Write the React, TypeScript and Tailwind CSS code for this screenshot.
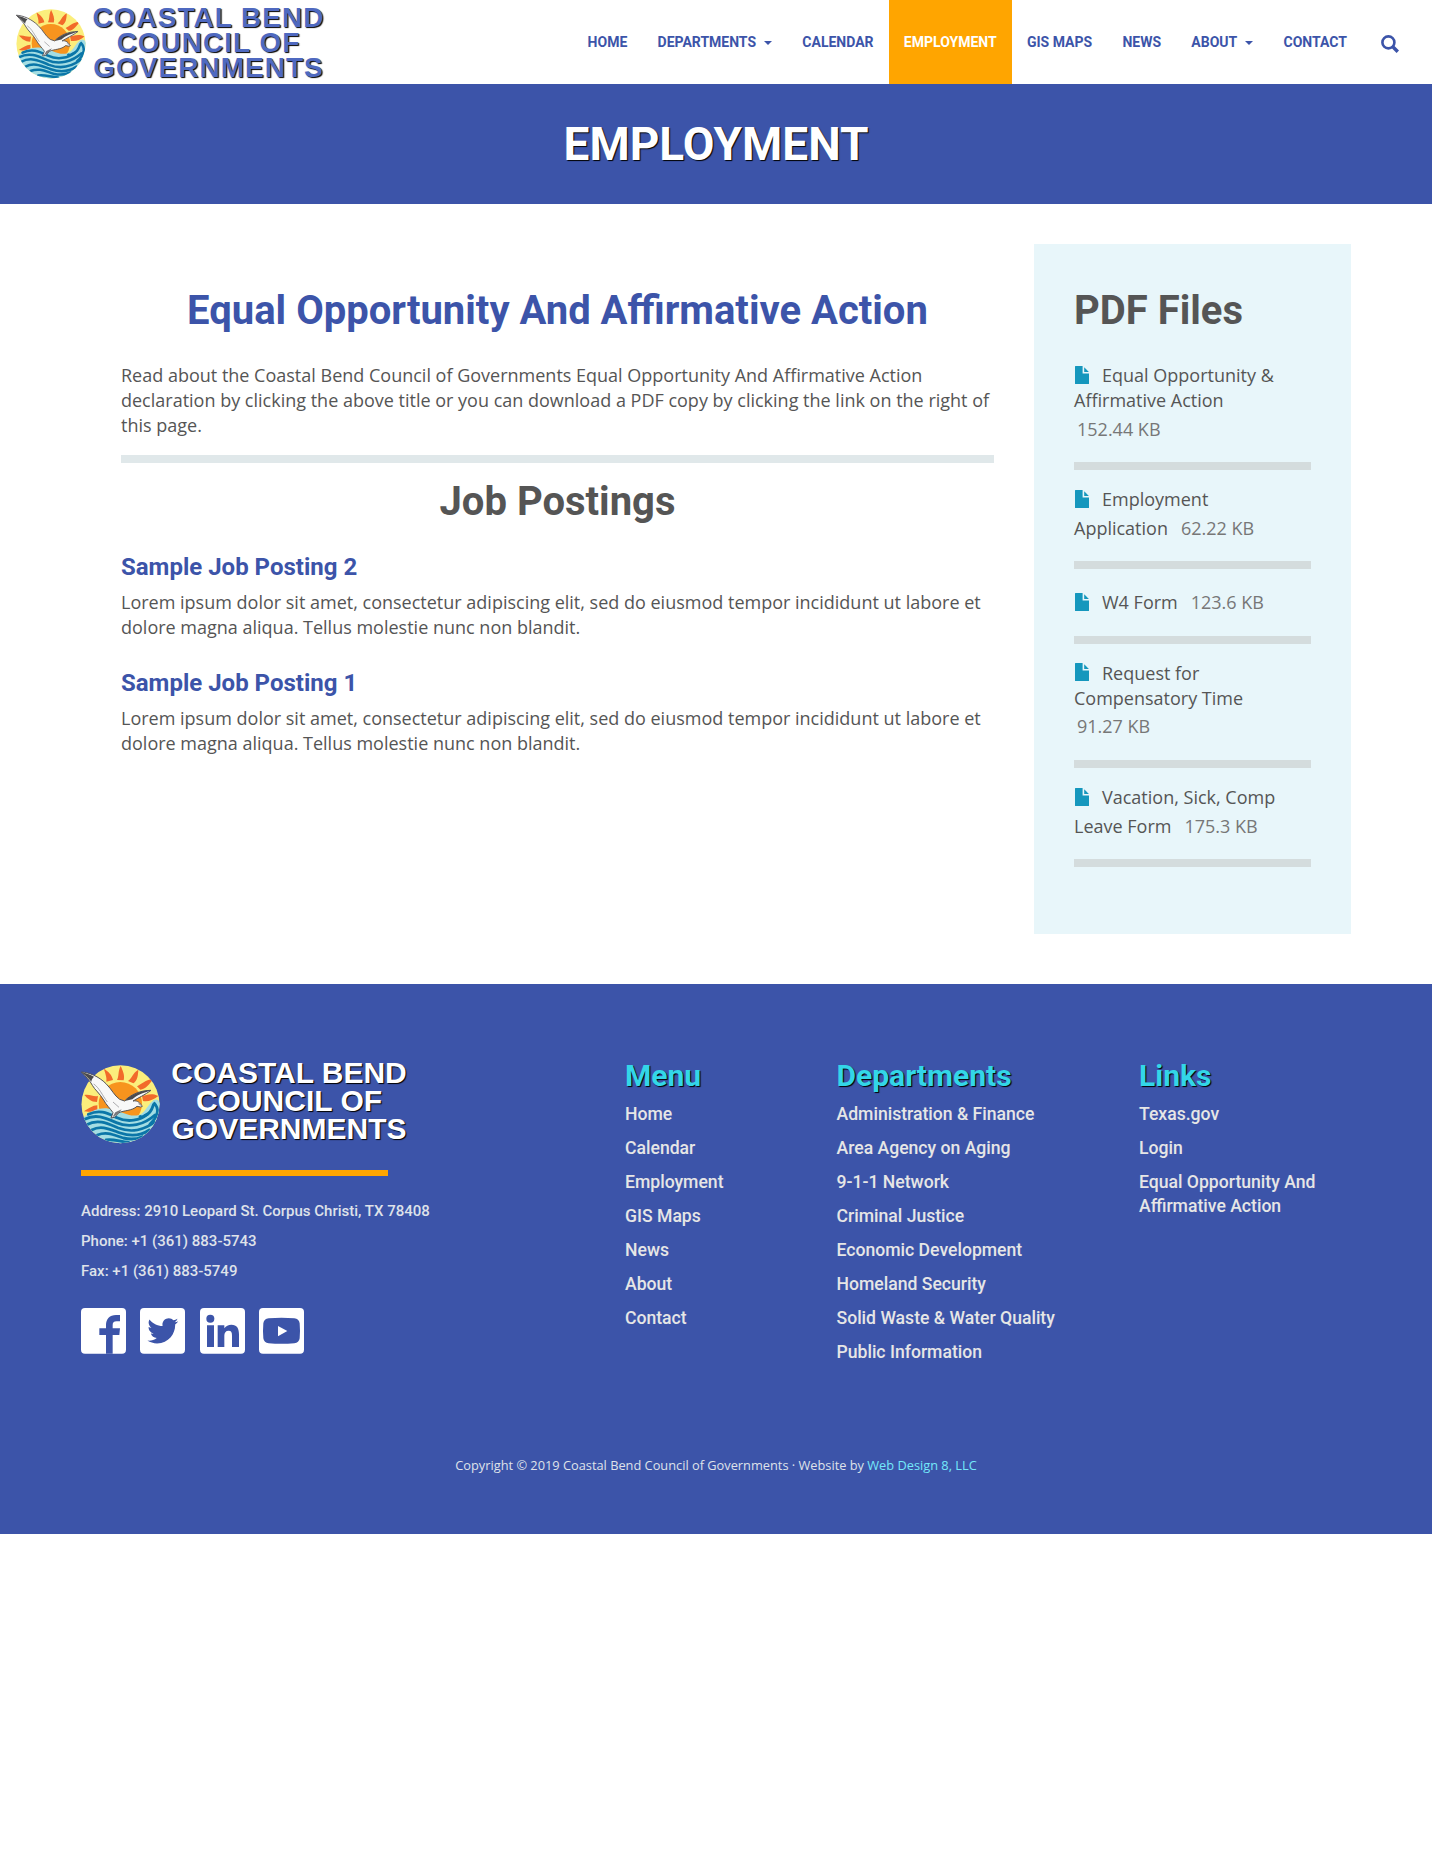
import type { ReactNode } from "react";

const navItems = [
  { label: "HOME" },
  { label: "DEPARTMENTS", caret: true },
  { label: "CALENDAR" },
  { label: "EMPLOYMENT", active: true },
  { label: "GIS MAPS" },
  { label: "NEWS" },
  { label: "ABOUT", caret: true },
  { label: "CONTACT" },
];

const files = [
  { first: "Equal Opportunity &", middle: "Affirmative Action", last: "", size: "152.44 KB" },
  { first: "Employment", middle: "", last: "Application", size: "62.22 KB" },
  { first: "", middle: "", last: "W4 Form", size: "123.6 KB" },
  { first: "Request for", middle: "Compensatory Time", last: "", size: "91.27 KB" },
  { first: "Vacation, Sick, Comp", middle: "", last: "Leave Form", size: "175.3 KB" },
];

const menuLinks = ["Home", "Calendar", "Employment", "GIS Maps", "News", "About", "Contact"];
const departmentLinks = [
  "Administration & Finance",
  "Area Agency on Aging",
  "9-1-1 Network",
  "Criminal Justice",
  "Economic Development",
  "Homeland Security",
  "Solid Waste & Water Quality",
  "Public Information",
];
const otherLinks = ["Texas.gov", "Login", "Equal Opportunity And Affirmative Action"];

function LogoMark({ className, id }: { className: string; id: string }) {
  return (
    <svg viewBox="0 0 237 237" className={className} aria-hidden="true">
      <defs>
        <clipPath id={id}>
          <circle cx="118.5" cy="118" r="117" />
        </clipPath>
      </defs>
      <g clipPath={`url(#${id})`}>
        <rect width="237" height="237" fill="#fbee7c" />
        <g fill="#f26a2a">
          <path d="M76 50C78 35 72 25 69 11C81 19 93 29 96 45Z" />
          <path d="M108 45C115 32 110 20 119 3C126 18 132 32 128 46Z" />
          <path d="M141 48C153 40 153 26 172 14C171 31 170 46 157 55Z" />
          <path d="M168 64C180 59 191 45 216 42C206 57 194 73 178 74Z" />
          <path d="M183 92C198 92 208 82 232 93C217 105 201 111 186 108Z" />
          <path d="M51 93C36 96 28 87 10 90C20 101 30 111 48 111Z" />
          <path d="M49 121C34 122 25 129 9 139C24 142 35 140 49 134Z" />
          <path d="M54 84C46 79 44 72 42 62L70 68Z" />
        </g>
        <circle cx="118" cy="116" r="65" fill="#f7941e" />
        <path
          d="M0 165C22 141 52 126 84 131C120 136 143 158 174 150C196 144 200 118 221 106C231 102 240 111 240 130V240H0Z"
          fill="#a3dde3"
        />
        <g fill="none" stroke="#0b76a8" strokeWidth="8.5" strokeLinecap="round">
          <path d="M22 148C57 132 80 145 108 158C142 174 178 165 199 148" />
          <path d="M11 163C45 145 74 159 106 173C145 190 190 179 222 150" />
          <path d="M17 179C52 160 83 177 112 189C151 204 190 194 219 172" />
          <path d="M32 195C61 179 87 193 118 204C150 215 181 211 205 195" />
          <path d="M49 210C80 198 102 212 127 219C148 224 169 222 184 215" />
          <path d="M75 225C96 221 116 230 143 232" />
          <path d="M177 155C211 151 214 128 219 114C224 119 231 127 229 142C226 158 218 168 207 177" />
        </g>
        <path d="M181 150C197 143 199 122 220 107C228 103 233 109 234 118" fill="none" stroke="#a3dde3" strokeWidth="5" />
      </g>
      <path
        d="M1 21C24 22 53 34 75 56C94 75 99 91 116 103L131 108C148 89 178 76 210 76C193 89 171 99 156 108C171 105 177 115 184 124L179 126L168 124C153 138 128 136 114 143L100 157L90 159L96 143C88 131 75 119 68 105C56 85 42 75 34 61C28 48 14 35 1 21Z"
        fill="#f8f8f8"
        stroke="#555457"
        strokeWidth="3"
        strokeLinejoin="round"
      />
      <path d="M1 21C15 25 28 29 39 35C34 40 32 43 31 50C22 39 11 30 1 21Z" fill="#4b4b4d" />
      <path d="M131 108C149 88 180 77 210 76C188 84 169 89 154 103Z" fill="#4b4b4d" />
      <path d="M94 157L103 142L122 133C115 143 110 149 94 157Z" fill="#77777a" />
      <path d="M38 57C54 67 64 91 79 111M96 111L114 127M172 116L184 124" fill="none" stroke="#99999c" strokeWidth="2.5" />
    </svg>
  );
}

function SearchIcon() {
  return (
    <svg viewBox="0 0 18 18" className="h-[18px] w-[18px]" fill="none" stroke="#3c54a9" aria-hidden="true">
      <circle cx="7.4" cy="7.4" r="6" strokeWidth="2.6" />
      <path d="M11.8 11.8L16.8 16.8" strokeWidth="3.4" />
    </svg>
  );
}

function FileIcon() {
  return (
    <svg viewBox="0 0 14 18" className="mt-[2.5px] mr-[13px] ml-px h-[18px] w-[14px] shrink-0" fill="#1597bd" aria-hidden="true">
      <path d="M0.5 0H7.6V7.6H14V17.5Q14 18 13.5 18H0.5Q0 18 0 17.5V0.5Q0 0 0.5 0Z" />
      <path d="M9.2 1.2L13.9 6H9.2Z" />
    </svg>
  );
}

function Social({ children }: { children: ReactNode }) {
  return (
    <svg viewBox="0 0 135 137" className="h-[45.7px] w-[45px]" aria-hidden="true">
      <rect width="135" height="137" rx="12" fill="#fff" />
      <g fill="#3c54a9">{children}</g>
    </svg>
  );
}

function FooterColumn({ title, links, className }: { title: string; links: string[]; className: string }) {
  return (
    <div className={className}>
      <h3 className="text-[30px] leading-[33px] font-bold text-[#33d6e8] [text-shadow:1px_1px_1px_#000]">{title}</h3>
      <ul className="mt-2.5 flex flex-col gap-2.5 text-[17.6px] leading-6 font-medium text-[#e6e6e6]">
        {links.map((link) => (
          <li key={link}>{link}</li>
        ))}
      </ul>
    </div>
  );
}

function JobPosting({ title }: { title: string }) {
  return (
    <article>
      <h3 className="font-[Roboto] text-2xl leading-[26px] font-bold text-[#3c54a9]">{title}</h3>
      <p className="mt-2.5">
        Lorem ipsum dolor sit amet, consectetur adipiscing elit, sed do eiusmod tempor incididunt ut labore et dolore
        magna aliqua. Tellus molestie nunc non blandit.
      </p>
    </article>
  );
}

export default function App() {
  return (
    <div className="min-h-[1870px] w-[1432px] bg-white font-['Open_Sans',sans-serif] text-[18px] leading-[25px] text-[#555]">
      <header className="flex h-[84px] items-start justify-between pl-[15.5px]">
        <div className="flex">
          <LogoMark id="mark-top" className="mt-[9px] h-[70px] w-[70px]" />
          <div className="mt-[5px] ml-[7px] w-[232px] text-center font-['Liberation_Sans',sans-serif] text-[28px] leading-[25px] font-bold tracking-[1px] whitespace-nowrap text-[#4f69c0] [text-shadow:1px_1px_1px_#000]">
            COASTAL BEND
            <br />
            COUNCIL OF
            <br />
            GOVERNMENTS
          </div>
        </div>
        <nav className="flex pr-[33px] font-[Roboto] text-sm leading-5 font-bold text-[#3c54a9]">
          {navItems.map((item) => (
            <a
              key={item.label}
              className={
                item.active
                  ? "flex h-[84px] bg-[#ffa500] px-[15.15px] pt-8 text-white"
                  : "flex h-[84px] px-[15.15px] pt-8"
              }
            >
              {item.label}
              {item.caret && (
                <span className="mt-[9px] ml-2 h-0 w-0 border-x-4 border-t-4 border-x-transparent border-t-[#3c54a9]" />
              )}
            </a>
          ))}
          <span className="mt-[35px] ml-[19px]">
            <SearchIcon />
          </span>
        </nav>
      </header>

      <section className="flex h-[120px] items-center justify-center bg-[#3c54a9]">
        <h1 className="font-[Roboto] text-[46px] leading-[50px] font-bold text-white [text-shadow:1px_1px_1px_#000]">
          EMPLOYMENT
        </h1>
      </section>

      <main className="flex items-start pt-10 pl-[121px]">
        <div className="w-[873px] pt-[45px]">
          <h2 className="text-center font-[Roboto] text-[40px] leading-[44px] font-bold text-[#3c54a9]">
            Equal Opportunity And Affirmative Action
          </h2>
          <p className="mt-[30px]">
            Read about the Coastal Bend Council of Governments Equal Opportunity And Affirmative Action declaration by
            clicking the above title or you can download a PDF copy by clicking the link on the right of this page.
          </p>
          <hr className="mt-[17px] h-2 border-0 bg-[#e0e8ea]" />
          <h2 className="mt-[17px] text-center font-[Roboto] text-[40px] leading-[44px] font-bold">Job Postings</h2>
          <div className="mt-[30px] flex flex-col gap-[30px]">
            <JobPosting title="Sample Job Posting 2" />
            <JobPosting title="Sample Job Posting 1" />
          </div>
        </div>

        <aside className="ml-10 h-[690px] w-[317px] bg-[#e8f6fa] px-10 pt-[45px]">
          <h2 className="font-[Roboto] text-[40px] leading-[44px] font-bold">PDF Files</h2>
          <ul className="mt-[12.75px]">
            {files.map((file) => (
              <li key={file.size} className="pt-[17.25px]">
                {file.first && (
                  <div className="flex h-[25px]">
                    <FileIcon />
                    {file.first}
                  </div>
                )}
                {file.middle && <div className="h-[25px]">{file.middle}</div>}
                <div className="flex h-8 pt-[3.5px]">
                  {!file.first && <FileIcon />}
                  {file.last}
                  <span className={file.last ? "ml-[13px] text-[#777]" : "ml-[3px] text-[#777]"}>{file.size}</span>
                </div>
                <hr className="mt-[17px] h-2 border-0 bg-[#d4dcdd]" />
              </li>
            ))}
          </ul>
        </aside>
      </main>

      <footer className="mt-[50px] flex h-[550px] flex-col bg-[#3c54a9] pt-[74px] font-[Roboto]">
        <div className="flex h-[398px] pl-[81px]">
          <div className="w-[544px]">
            <div className="flex">
              <LogoMark id="mark-bottom" className="mt-[7px] h-[79px] w-[79px]" />
              <div className="mt-px ml-[9px] w-[240px] text-center font-['Liberation_Sans',sans-serif] text-[30px] leading-7 font-bold whitespace-nowrap text-white [text-shadow:1px_1px_1px_#000]">
                COASTAL BEND
                <br />
                COUNCIL OF
                <br />
                GOVERNMENTS
              </div>
            </div>
            <div className="mt-[26px] h-1.5 w-[307px] bg-[#ffa500]" />
            <address className="mt-[25px] flex flex-col gap-2.5 text-[15px] leading-5 font-medium text-[#dfe2ea] not-italic">
              <span>Address: 2910 Leopard St. Corpus Christi, TX 78408</span>
              <span>Phone: +1 (361) 883-5743</span>
              <span>Fax: +1 (361) 883-5749</span>
            </address>
            <div className="mt-[27px] flex gap-[14.3px]">
              <Social>
                <path d="M75 137V81H55V61H75V52C75 32 86 21 105 21H117V40H107C98 40 95 44 95 51V61H117L115 81H95V137Z" />
              </Social>
              <Social>
                <svg x="22" y="22" width="93" height="93" viewBox="0 0 512 512">
                  <path d="M459.37 151.716c.325 4.548.325 9.097.325 13.645 0 138.72-105.583 298.558-298.558 298.558-59.452 0-114.68-17.219-161.137-47.106 8.447.974 16.568 1.299 25.34 1.299 49.055 0 94.213-16.568 130.274-44.832-46.132-.975-84.792-31.188-98.112-72.772 6.498.974 12.995 1.624 19.818 1.624 9.421 0 18.843-1.3 27.614-3.573-48.081-9.747-84.143-51.98-84.143-102.985v-1.299c13.969 7.797 30.214 12.67 47.431 13.319-28.264-18.843-46.781-51.005-46.781-87.391 0-19.492 5.197-37.36 14.294-52.954 51.655 63.675 129.3 105.258 216.365 109.807-1.624-7.797-2.599-15.918-2.599-24.04 0-57.828 46.782-104.934 104.934-104.934 30.213 0 57.502 12.67 76.67 33.137 23.715-4.548 46.456-13.32 66.599-25.34-7.798 24.366-24.366 44.833-46.132 57.827 21.117-2.273 41.584-8.122 60.426-16.243-14.292 20.791-32.161 39.308-52.628 54.253z" />
                </svg>
              </Social>
              <Social>
                <circle cx="31" cy="32" r="12" />
                <path d="M21 52H42V117H21ZM53 52H73V61C78 54 85 50 94 50C111 50 117 61 117 79V117H96V83C96 73 94 68 86 68C77 68 73 74 73 83V117H53Z" />
              </Social>
              <Social>
                <path d="M29 31Q67 28 106 31Q120 32 122 46Q124 69 122 91Q120 105 106 106Q67 109 29 106Q15 105 13 91Q11 69 13 46Q15 32 29 31ZM57 54V85L85 69Z" fillRule="evenodd" />
              </Social>
            </div>
          </div>
          <FooterColumn title="Menu" links={menuLinks} className="mt-px w-[211.5px]" />
          <FooterColumn title="Departments" links={departmentLinks} className="mt-px w-[302.5px]" />
          <FooterColumn title="Links" links={otherLinks} className="mt-px w-[212px]" />
        </div>
        <p className="text-center font-['Open_Sans',sans-serif] text-[12.8px] leading-[18px] text-[#dfe2ea]">
          Copyright © 2019 Coastal Bend Council of Governments · Website by{" "}
          <a className="text-[#74e8fa]">Web Design 8, LLC</a>
        </p>
      </footer>
    </div>
  );
}
